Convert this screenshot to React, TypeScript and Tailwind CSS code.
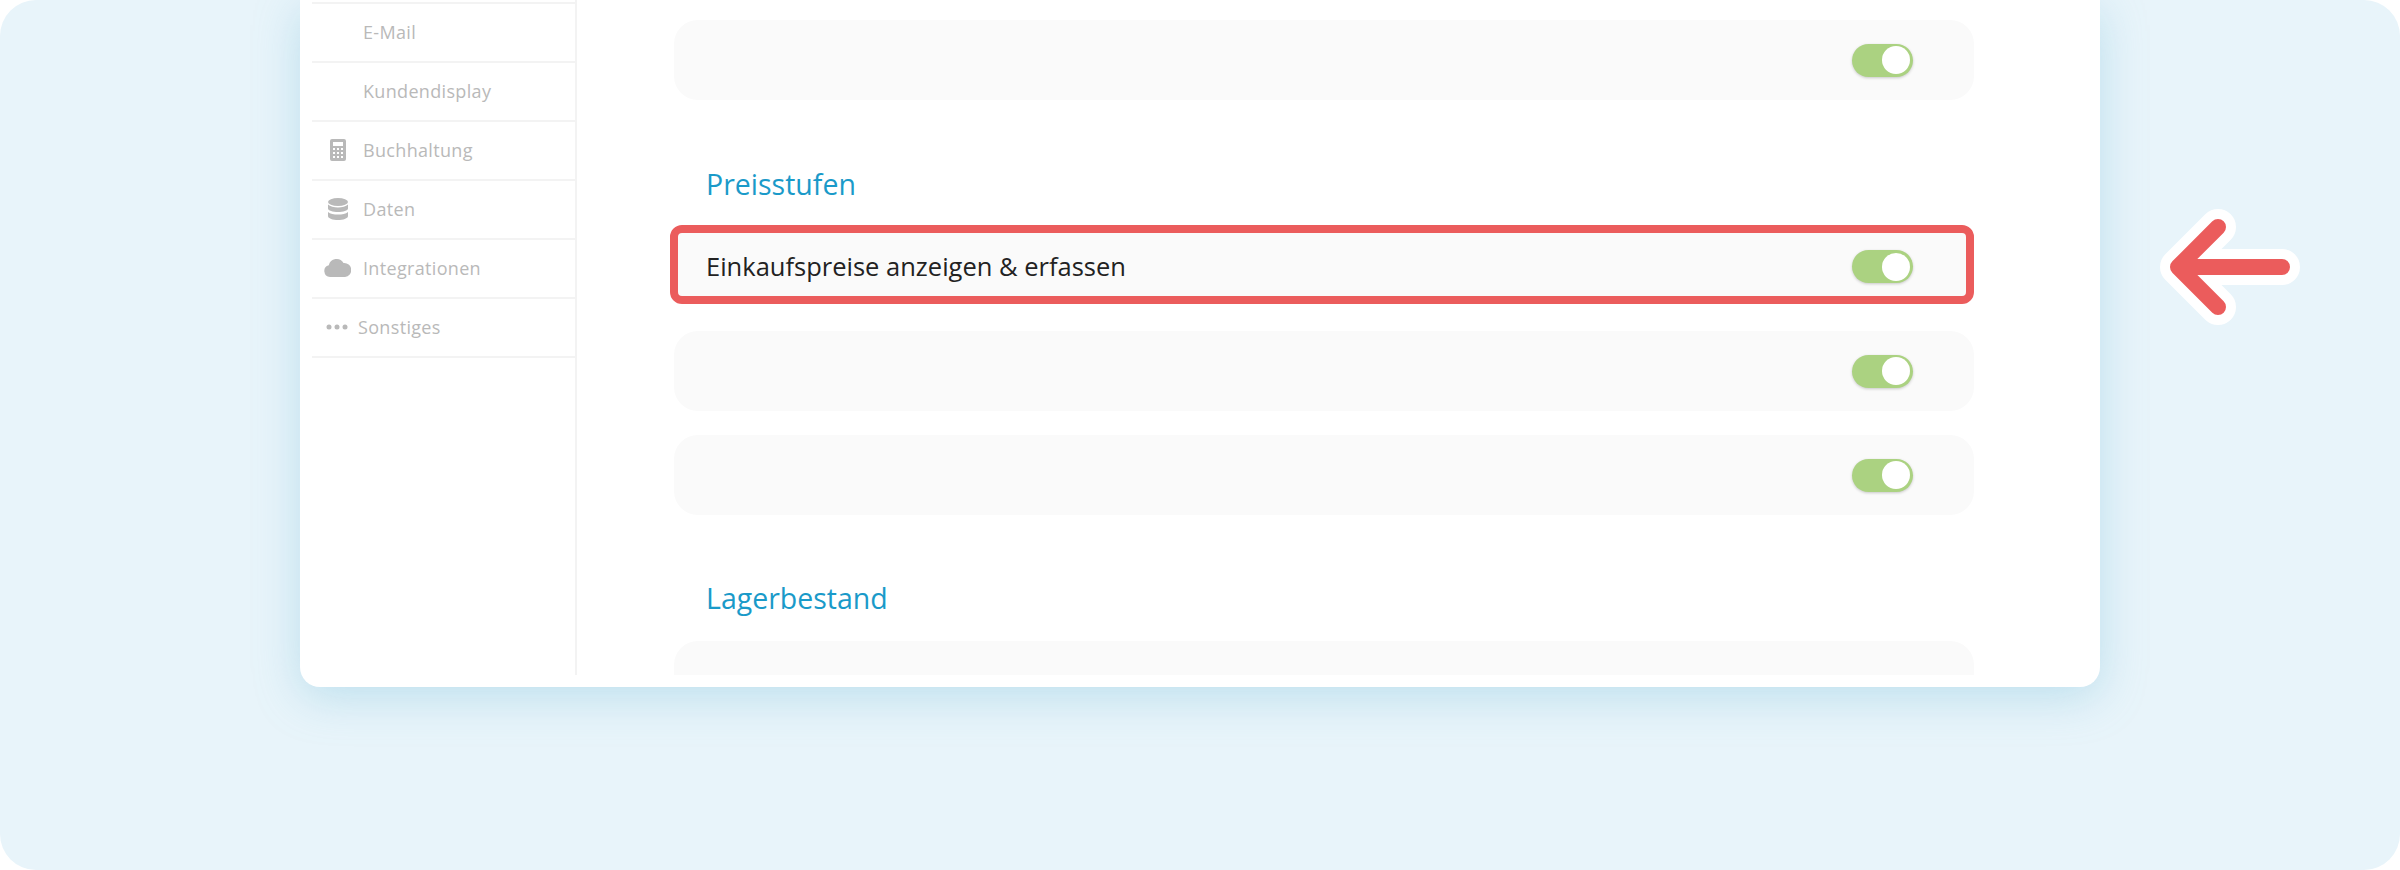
const FONT = "font-['Open_Sans',sans-serif]";

function Calculator() {
  return (
    <svg width="16" height="22" viewBox="0 0 16 22" className="block">
      <path fillRule="evenodd" fill="#b9b9b9" d="M2 0h12a2 2 0 0 1 2 2v18a2 2 0 0 1-2 2H2a2 2 0 0 1-2-2V2a2 2 0 0 1 2-2zM3 3v4h10V3zM3 9v2h2V9zm4 0v2h2V9zm4 0v2h2V9zM3 13v2h2v-2zm4 0v2h2v-2zm4 0v2h2v-2zM3 17v2h2v-2zm4 0v2h2v-2zm4 0v2h2v-2z" />
    </svg>
  );
}

function Database() {
  return (
    <svg width="20" height="22" viewBox="0 0 20 22" className="block">
      <ellipse cx="10" cy="4" rx="10" ry="4" fill="#b9b9b9" />
      <path fill="#b9b9b9" d="M0 6.500C2 8.500 6 9.500 10 9.500S18 8.500 20 6.500V10.500C20 12.500 15 14 10 14S0 12.500 0 10.500z" />
      <path fill="#b9b9b9" d="M0 14C2 16 6 16.500 10 16.500S18 16 20 14V18C20 20.500 15 22 10 22S0 20.500 0 18z" />
    </svg>
  );
}

function Cloud() {
  return (
    <svg width="27" height="19" viewBox="0 0 27 19" className="block">
      <path fill="#b9b9b9" d="M6 19A6 6 0 0 1 4.800 7.200 8 8 0 0 1 19.500 5 7 7 0 0 1 21 19z" />
    </svg>
  );
}

function Dots() {
  return (
    <svg width="22" height="6" viewBox="0 0 22 6" className="block">
      <circle cx="3" cy="3" r="2.500" fill="#b9b9b9" />
      <circle cx="11" cy="3" r="2.500" fill="#b9b9b9" />
      <circle cx="19" cy="3" r="2.500" fill="#b9b9b9" />
    </svg>
  );
}

function NavRow({ label, icon, dots }: { label: string; icon?: React.ReactNode; dots?: boolean }) {
  return (
    <div className="flex h-[59px] items-center border-b-2 border-[#f3f3f3] pb-[2px]">
      <div className={dots ? "flex w-[46px] shrink-0 justify-center pl-[3px]" : "flex w-[51px] shrink-0 justify-center"}>{icon}</div>
      <span className="text-[18px] leading-none tracking-[0.33px] text-[#b9b9b9]">{label}</span>
    </div>
  );
}

function Toggle() {
  return (
    <div className="flex h-[33px] w-[61px] items-center justify-end rounded-full bg-[#abd281] pr-[3px] shadow-[0_1px_3px_rgba(0,0,0,0.2)]">
      <div className="h-[28px] w-[28px] rounded-full bg-white" />
    </div>
  );
}

function SettingRow({ className = "" }: { className?: string }) {
  return (
    <div className={`flex h-[80px] shrink-0 items-center justify-end rounded-[24px] bg-[#fafafa] pr-[61px] ${className}`}>
      <Toggle />
    </div>
  );
}

function Heading({ children, className = "" }: { children: React.ReactNode; className?: string }) {
  return <h2 className={`pl-[32px] text-[28.5px] leading-[38px] text-[#1a9ac9] ${className}`}>{children}</h2>;
}

export default function App() {
  return (
    <div className={`h-[870px] w-[2400px] bg-white ${FONT}`}>
      <div className="relative flex h-full justify-center overflow-hidden rounded-[36px] bg-[#e8f4fa]">
        <div className="flex h-[687px] w-[1800px] overflow-hidden rounded-b-[20px] bg-white pb-3 pl-3 shadow-[0_10px_45px_rgba(110,185,215,0.35)]">
          <aside className="w-[265px] shrink-0 border-r-2 border-[#f3f3f3] pt-[2px]">
            <div className="border-t-2 border-[#f3f3f3]">
              <NavRow label="E-Mail" />
              <NavRow label="Kundendisplay" />
              <NavRow label="Buchhaltung" icon={<Calculator />} />
              <NavRow label="Daten" icon={<Database />} />
              <NavRow label="Integrationen" icon={<Cloud />} />
              <NavRow label="Sonstiges" icon={<Dots />} dots />
            </div>
          </aside>
          <main className="flex min-w-0 flex-1 flex-col overflow-hidden pl-[97px] pr-[126px] pt-5">
            <SettingRow />
            <Heading className="mt-[65px]">Preisstufen</Heading>
            <div className="-ml-1 mt-[22px] flex h-[79px] shrink-0 items-center justify-between rounded-[12px] border-8 border-[#eb5c5c] bg-[#fafafa] pl-[28px] pr-[53px] pt-[4px]">
              <span className="text-[25.5px] leading-none text-[#222222]">Einkaufspreise anzeigen &amp; erfassen</span>
              <Toggle />
            </div>
            <SettingRow className="mt-[27px]" />
            <SettingRow className="mt-6" />
            <Heading className="mt-[64px]">Lagerbestand</Heading>
            <div className="mt-[24px] h-[80px] shrink-0 rounded-[24px] bg-[#fafafa]" />
          </main>
        </div>
        <svg width="140" height="116" viewBox="0 0 140 116" className="absolute left-[2160px] top-[209px]">
          <g fill="none" strokeLinecap="round" strokeLinejoin="round">
            <path d="M58 18 L18 58 L58 98 M18 58 H122" stroke="white" strokeWidth="36" />
            <path d="M58 18 L18 58 L58 98 M18 58 H122" stroke="#eb5c5c" strokeWidth="16" />
          </g>
        </svg>
      </div>
    </div>
  );
}
